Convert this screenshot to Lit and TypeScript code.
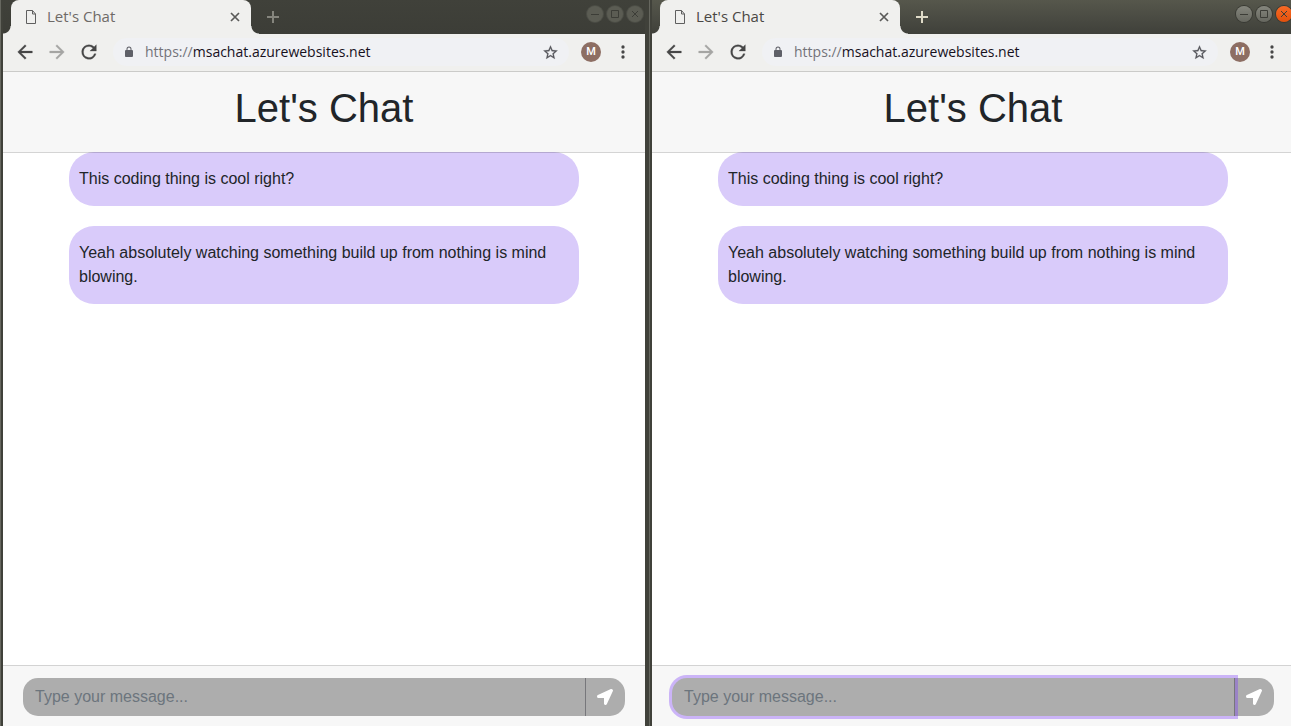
import { LitElement, html, css, svg } from "lit";
import { customElement, property } from "lit/decorators.js";
import { classMap } from "lit/directives/class-map.js";

const icon = (path: string, name: string) =>
  html`<svg class=${name} viewBox="0 0 24 24" aria-hidden="true">${svg`<path d=${path} />`}</svg>`;

const BACK = "M20 11H7.83l5.59-5.59L12 4l-8 8 8 8 1.41-1.41L7.83 13H20z";
const FORWARD = "M12 4l-1.41 1.41L16.17 11H4v2h12.17l-5.58 5.59L12 20l8-8z";
const RELOAD =
  "M17.65 6.35A7.96 7.96 0 0 0 12 4a8 8 0 1 0 7.73 10h-2.08A6 6 0 1 1 12 6c1.66 0 3.14.69 4.22 1.78L13 11h7V4z";
const LOCK =
  "M18 8h-1V6A5 5 0 0 0 7 6v2H6a2 2 0 0 0-2 2v10c0 1.1.9 2 2 2h12a2 2 0 0 0 2-2V10a2 2 0 0 0-2-2zM9 6a3 3 0 0 1 6 0v2H9z";
const STAR =
  "M22 9.24l-7.19-.62L12 2 9.19 8.63 2 9.24l5.46 4.73L5.82 21 12 17.27 18.18 21l-1.63-7.03zM12 15.4l-3.76 2.27 1-4.28-3.32-2.88 4.38-.38L12 6.1l1.71 4.04 4.38.38-3.32 2.88 1 4.28z";
const DOTS =
  "M12 8a2 2 0 1 0 0-4 2 2 0 0 0 0 4zm0 2a2 2 0 1 0 0 4 2 2 0 0 0 0-4zm0 6a2 2 0 1 0 0 4 2 2 0 0 0 0-4z";

@customElement("chat-page")
export class ChatPage extends LitElement {
  @property({ type: Boolean }) active = false;
  @property({ attribute: false }) messages: string[] = [];

  static styles = css`
    :host {
      display: flex;
      flex-direction: column;
      flex: 1;
      min-height: 0;
      background: #fff;
      color: #212529;
      font: 16px/24px "Liberation Sans", Arial, sans-serif;
    }
    * { box-sizing: border-box; }
    header {
      position: relative;
      z-index: 1;
      padding: 12px 20px 20px;
      background: #f7f7f7;
      background-clip: padding-box;
      border-bottom: 1px solid rgba(0, 0, 0, 0.17);
      text-align: center;
    }
    h1 { margin: 0; font-size: 40px; line-height: 48px; font-weight: 400; }
    main {
      flex: 1;
      min-height: 0;
      width: 100%;
      max-width: 540px;
      margin: -1px auto 0;
      padding: 0 15px;
    }
    ul { list-style: none; margin: 0; padding: 0; display: grid; gap: 20px; }
    li { padding: 15px 10px; border-radius: 25px; background: #d9cbfa; }
    form {
      display: flex;
      padding: 12px 20px 10px;
      background: #f7f7f7;
      border-top: 1px solid #d3d3d3;
    }
    input {
      flex: 1;
      min-width: 0;
      height: 38px;
      padding: 0 12px;
      border: 0;
      border-right: 1px solid #77777b;
      border-radius: 15px 0 0 15px;
      background: #adadad;
      font: inherit;
      color: #495057;
      outline: none;
    }
    input::placeholder { color: #6c757d; opacity: 1; }
    .focused { z-index: 1; box-shadow: 0 0 0 3px rgba(121, 54, 245, 0.35); }
    button {
      display: grid;
      place-items: center;
      width: 39px;
      border: 0;
      padding: 0 2px 0 0;
      border-radius: 0 15px 15px 0;
      background: #adadad;
    }
    .send { width: 16px; height: 16px; fill: #fff; }
  `;

  render() {
    return html`
      <header><h1>Let's Chat</h1></header>
      <main><ul>${this.messages.map((m) => html`<li>${m}</li>`)}</ul></main>
      <form>
        <input type="text" aria-label="Message" placeholder="Type your message..."
          class=${classMap({ focused: this.active })} />
        <button type="button" aria-label="Send">
          <svg class="send" viewBox="0 0 512 512" aria-hidden="true">
            <path d="M444.52 3.52L28.74 195.42c-47.97 22.39-31.98 92.75 19.19 92.75h175.91v175.91c0 51.17 70.36 67.17 92.75 19.19l191.9-415.78c15.99-38.39-25.59-79.97-63.97-63.97z" />
          </svg>
        </button>
      </form>
    `;
  }
}

@customElement("browser-window")
export class BrowserWindow extends LitElement {
  @property({ type: Boolean, reflect: true }) active = false;
  @property({ attribute: false }) messages: string[] = [];

  static styles = css`
    :host {
      display: flex;
      flex-direction: column;
      min-width: 0;
      background: #40413a;
      border-left: 1px solid #66675f;
      padding: 0 4px 0 2px;
      box-sizing: border-box;
      font: 14px/20px "Open Sans", "Noto Sans", sans-serif;
      --bar: linear-gradient(#40413a, #3c3d37);
      --title: #6e6a67;
      --plus: #85857d;
      --control: #5b5c53;
      --ring: #4c4d46;
      --glyph: #3c3d37;
    }
    :host([active]) {
      --bar: linear-gradient(#56574c, #3f403a);
      --title: #4a4744;
      --plus: #dfdbc8;
      --control: linear-gradient(#85867d, #66675f);
      --ring: #393a34;
    }
    * { box-sizing: border-box; }
    button { padding: 0; border: 0; background: none; display: grid; place-items: center; }
    .titlebar {
      display: flex;
      align-items: flex-start;
      height: 34px;
      padding: 0 2px 0 8px;
      background: var(--bar);
    }
    .tab {
      position: relative;
      display: flex;
      align-items: center;
      gap: 9px;
      width: 240px;
      height: 34px;
      padding: 0 9px 0 13px;
      border-radius: 8px 8px 0 0;
      background: #f0f0ee;
      color: var(--title);
    }
    .tab::before,
    .tab::after {
      content: "";
      position: absolute;
      bottom: 0;
      width: 8px;
      height: 8px;
    }
    .tab::before { right: 100%; background: radial-gradient(circle at 0 0, transparent 7px, #f0f0ee 8px); }
    .tab::after { left: 100%; background: radial-gradient(circle at 100% 0, transparent 7px, #f0f0ee 8px); }
    .page, .close, .plus, .glyph { fill: none; stroke-width: 1; }
    .page { width: 14px; height: 16px; stroke: #5f5f5f; }
    .label { flex: 1; padding-bottom: 2px; font-size: 15px; }
    .close { width: 14px; height: 14px; stroke: #5a5a58; stroke-width: 1.7; }
    .new { margin: 9px auto 0 14px; }
    .plus { width: 16px; height: 16px; stroke: var(--plus); stroke-width: 2; }
    .controls { display: flex; gap: 4px; padding-top: 6px; }
    .control {
      width: 16px;
      height: 16px;
      border-radius: 8px;
      background: var(--control);
      box-shadow: 0 0 0 1px var(--ring);
    }
    :host([active]) .quit { background: linear-gradient(#f86a25, #e2500c); }
    .glyph { width: 16px; height: 16px; stroke: var(--glyph); }
    .toolbar {
      display: flex;
      align-items: center;
      gap: 10px;
      height: 38px;
      padding: 0 12px 1px 11px;
      background: #f0f0ee;
      border-bottom: 1px solid #cbcbc9;
    }
    .nav, .dim { width: 22px; height: 22px; fill: #464646; stroke: #464646; stroke-width: 0.3; }
    .dim { fill: #a5a5a3; stroke: #a5a5a3; }
    .omnibox {
      flex: 1;
      min-width: 0;
      display: flex;
      align-items: center;
      gap: 10px;
      height: 28px;
      margin: 0 2px 0 3px;
      padding: 0 10px;
      border-radius: 14px;
      background: #f0f1f4;
    }
    .lock { width: 12px; height: 12px; fill: #5f6068; }
    .url { flex: 1; color: #16101c; }
    .scheme { color: #73737a; }
    .star { width: 17px; height: 17px; fill: #55565c; stroke: #55565c; stroke-width: 0.3; }
    .avatar {
      width: 20px;
      height: 20px;
      margin-right: 2px;
      border-radius: 10px;
      background: #8d6e63;
      color: #fff;
      font: 500 11px/20px Roboto, sans-serif;
    }
    .menu { width: 20px; height: 20px; fill: #464646; }
  `;

  render() {
    return html`
      <div class="titlebar">
        <div class="tab">
          <svg class="page" viewBox="0 0 14 16" aria-hidden="true"><path d="M2.500 1.500h6l3 3.500v9.500h-9zM8.500 1.500v3.500h3" /></svg>
          <span class="label">Let's Chat</span>
          <button aria-label="Close tab">
            <svg class="close" viewBox="0 0 14 14"><path d="M3 3l8 8M11 3l-8 8" /></svg>
          </button>
        </div>
        <button class="new" aria-label="New tab">
          <svg class="plus" viewBox="0 0 16 16"><path d="M8 2v12M2 8h12" /></svg>
        </button>
        <div class="controls">
          <button class="control" aria-label="Minimize">
            <svg class="glyph" viewBox="0 0 16 16"><path d="M4 8.500h8" /></svg>
          </button>
          <button class="control" aria-label="Maximize">
            <svg class="glyph" viewBox="0 0 16 16"><path d="M4.500 4.500h7v7h-7z" /></svg>
          </button>
          <button class="control quit" aria-label="Close window">
            <svg class="glyph" viewBox="0 0 16 16"><path d="M5 5l6 6M11 5l-6 6" /></svg>
          </button>
        </div>
      </div>
      <div class="toolbar">
        <button aria-label="Back">${icon(BACK, "nav")}</button>
        <button aria-label="Forward">${icon(FORWARD, "dim")}</button>
        <button aria-label="Reload">${icon(RELOAD, "nav")}</button>
        <div class="omnibox">
          ${icon(LOCK, "lock")}
          <span class="url"><span class="scheme">https://</span>msachat.azurewebsites.net</span>
          <button aria-label="Bookmark">${icon(STAR, "star")}</button>
        </div>
        <button class="avatar" aria-label="Profile">M</button>
        <button aria-label="Menu">${icon(DOTS, "menu")}</button>
      </div>
      <chat-page ?active=${this.active} .messages=${this.messages}></chat-page>
    `;
  }
}

@customElement("app-root")
export class AppRoot extends LitElement {
  static styles = css`
    :host { display: block; height: 100vh; overflow: hidden; }
    .desktop {
      display: grid;
      grid-template-columns: 1fr 1fr;
      width: calc(100% + 7px);
      height: 100%;
    }
  `;

  private messages = [
    "This coding thing is cool right?",
    "Yeah absolutely watching something build up from nothing is mind blowing.",
  ];

  render() {
    return html`
      <div class="desktop">
        <browser-window .messages=${this.messages}></browser-window>
        <browser-window active .messages=${this.messages}></browser-window>
      </div>
    `;
  }
}
